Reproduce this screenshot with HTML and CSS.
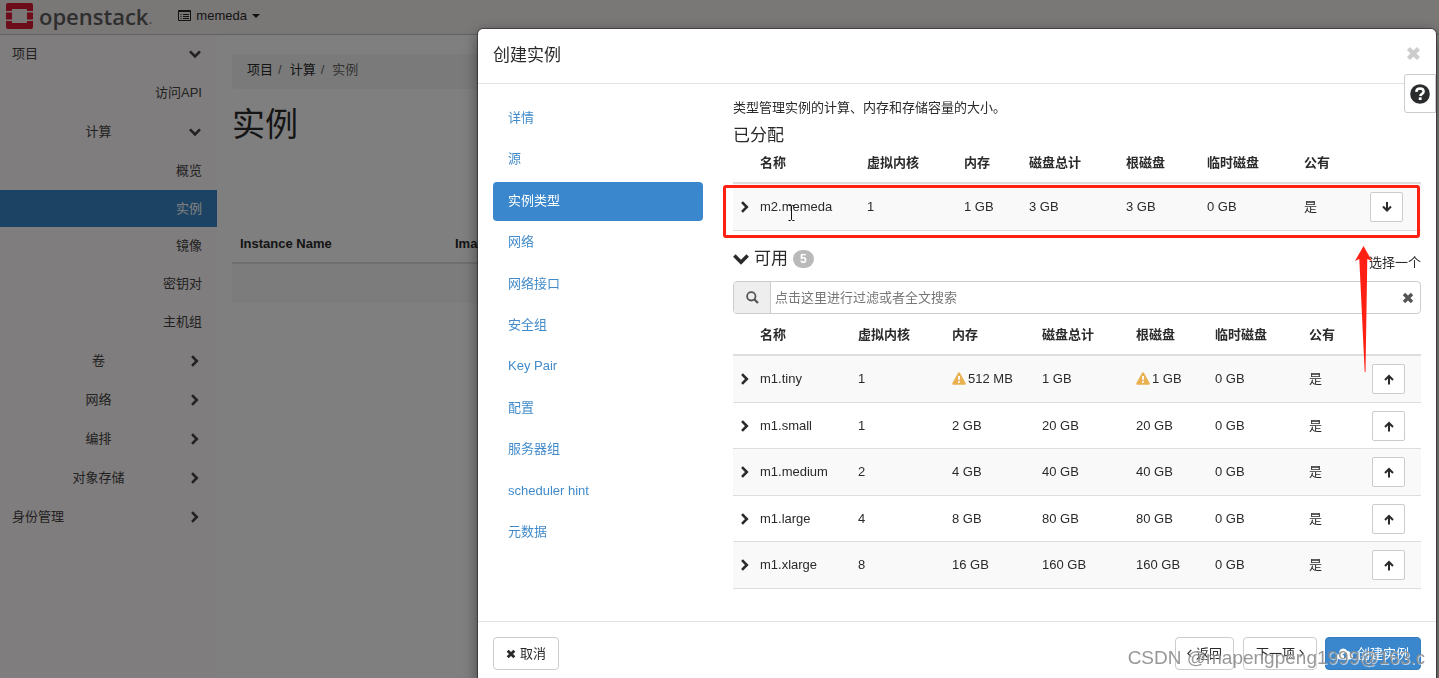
FILE: index.html
```html
<!DOCTYPE html>
<html lang="zh-CN">
<head>
<meta charset="utf-8">
<title>实例 - OpenStack Dashboard</title>
<link rel="stylesheet" href="styles.css">
</head>
<body>
<svg class="defs" aria-hidden="true">
  <symbol id="chev-right" viewBox="0 0 12 12"><path d="M3 1.200 7.800 6 3 10.800" fill="none" stroke="currentColor" stroke-width="2.600"/></symbol>
  <symbol id="chev-down" viewBox="0 0 12 12"><path d="M1 3.400 6 8.400 11 3.400" fill="none" stroke="currentColor" stroke-width="2.600"/></symbol>
  <symbol id="times" viewBox="0 0 12 12"><path d="M2 2 10 10M10 2 2 10" fill="none" stroke="currentColor" stroke-width="3.400"/></symbol>
  <symbol id="arrow-up" viewBox="0 0 12 12"><path d="M6 11.500V3M2 7 6 3 10 7" fill="none" stroke="currentColor" stroke-width="2"/></symbol>
  <symbol id="arrow-down" viewBox="0 0 12 12"><path d="M6 1V9.500M2 5.500 6 9.500 10 5.500" fill="none" stroke="currentColor" stroke-width="2"/></symbol>
  <symbol id="warning" viewBox="0 0 14 13"><path d="M7 .3Q7.700.3 8 .9L13.700 11.300Q14 12.600 12.900 12.700H1.100Q0 12.600.300 11.300L6 .9Q6.300.3 7 .3Z" fill="#e9b04f"/><path d="M6 4H8L7.700 8.300H6.300ZM6.100 9.200H7.900V11H6.100Z" fill="#fff"/></symbol>
</svg>

<header class="topbar">
  <a class="brand" href="#">
    <svg class="logo" viewBox="0 0 27 26" aria-hidden="true">
      <path d="M2 0H25Q27 0 27 2V8H21V6H6V8H0V2Q0 0 2 0ZM0 9.500H6V16.500H0ZM21 9.500H27V16.500H21ZM0 18H6V20H21V18H27V24Q27 26 25 26H2Q0 26 0 24Z" fill="#da1a32"/>
    </svg>
    <span>openstack</span><small>.</small>
  </a>
  <button class="project" type="button">
    <svg width="13" height="11" viewBox="0 0 13 11" aria-hidden="true"><path d="M.5.5H12.500V10.500H.5Z" fill="none" stroke="#222"/><path d="M.5 1.500H12.500M2.500 4.500H3.500M5 4.500H11M2.500 6.500H3.500M5 6.500H11M2.500 8.500H3.500M5 8.500H11" stroke="#222"/></svg>
    memeda
    <span class="caret"></span>
  </button>
</header>

<div class="page">
  <nav class="sidebar" aria-label="主导航">
    <a class="root" href="#"><span>项目</span><svg><use href="#chev-down"/></svg></a>
    <a class="leaf" href="#">访问API</a>
    <a class="group" href="#"><span>计算</span><svg><use href="#chev-down"/></svg></a>
    <a class="leaf" href="#">概览</a>
    <a class="leaf active" href="#">实例</a>
    <a class="leaf sub" href="#">镜像</a>
    <a class="leaf sub" href="#">密钥对</a>
    <a class="leaf sub" href="#">主机组</a>
    <a class="group" href="#"><span>卷</span><svg><use href="#chev-right"/></svg></a>
    <a class="group" href="#"><span>网络</span><svg><use href="#chev-right"/></svg></a>
    <a class="group" href="#"><span>编排</span><svg><use href="#chev-right"/></svg></a>
    <a class="group" href="#"><span>对象存储</span><svg><use href="#chev-right"/></svg></a>
    <a class="root" href="#"><span>身份管理</span><svg><use href="#chev-right"/></svg></a>
  </nav>
  <main class="content">
    <ol class="breadcrumb">
      <li><a href="#">项目</a></li>
      <li><a href="#">计算</a></li>
      <li class="current">实例</li>
    </ol>
    <h1>实例</h1>
    <table class="instances">
      <thead><tr><th class="c-name">Instance Name</th><th>Image Name</th></tr></thead>
      <tbody><tr><td colspan="2"></td></tr></tbody>
    </table>
  </main>
</div>

<div class="overlay">
  <section class="modal" role="dialog" aria-labelledby="dlg-title">
    <header class="modal-head">
      <h2 id="dlg-title">创建实例</h2>
      <button class="close" type="button" aria-label="关闭"><svg><use href="#times"/></svg></button>
    </header>
    <button class="help" type="button" aria-label="帮助">
      <svg viewBox="0 0 20 20" aria-hidden="true"><circle cx="10" cy="10" r="9.800" fill="#292b2d"/><path d="M6.300 7.800Q6.500 4.500 10.100 4.500 13.600 4.600 13.600 7.400 13.600 8.900 12 9.800 10.400 10.700 10.200 12" fill="none" stroke="#fff" stroke-width="2.500"/><path d="M8.800 13.300H11.600V16H8.800Z" fill="#fff"/></svg>
    </button>

    <div class="modal-body">
      <nav class="steps" aria-label="步骤">
        <a href="#">详情</a>
        <a href="#">源</a>
        <a class="active" href="#">实例类型</a>
        <a href="#">网络</a>
        <a href="#">网络接口</a>
        <a href="#">安全组</a>
        <a href="#">Key Pair</a>
        <a href="#">配置</a>
        <a href="#">服务器组</a>
        <a href="#">scheduler hint</a>
        <a href="#">元数据</a>
      </nav>

      <div class="flavors">
        <p>类型管理实例的计算、内存和存储容量的大小。</p>
        <h3>已分配</h3>
        <div class="allocated">
          <table class="grid">
            <colgroup><col class="w27"><col class="w107"><col class="w97"><col class="w65"><col class="w97"><col class="w81"><col class="w97"><col class="w66"><col class="w51"></colgroup>
            <thead><tr><th></th><th>名称</th><th>虚拟内核</th><th>内存</th><th>磁盘总计</th><th>根磁盘</th><th>临时磁盘</th><th>公有</th><th></th></tr></thead>
            <tbody>
              <tr><td class="tog"><svg><use href="#chev-right"/></svg></td><td>m2.memeda</td><td>1</td><td>1 GB</td><td>3 GB</td><td>3 GB</td><td>0 GB</td><td>是</td><td><button class="move" type="button" aria-label="移除 m2.memeda"><svg><use href="#arrow-down"/></svg></button></td></tr>
            </tbody>
          </table>
          <div class="mark"></div>
          <svg class="ibeam" viewBox="0 0 7 16" aria-hidden="true"><path d="M.5.5H2.500L3.500 1.500 4.500.5H6.500M3.500 1.500V14.500M.5 15.500H2.500L3.500 14.500 4.500 15.500H6.500" fill="none" stroke="#111"/></svg>
        </div>

        <div class="avail-head">
          <h3><svg><use href="#chev-down"/></svg>可用<span class="badge">5</span></h3>
          <span class="hint">选择一个</span>
          <svg class="pointer" viewBox="0 0 18 127" aria-hidden="true"><path d="M8.500 0 17 15 12.300 13 10.500 126H9.700L4.300 13 0 15Z" fill="#ff2013"/></svg>
        </div>

        <div class="search">
          <label for="filter" aria-label="过滤"><svg viewBox="0 0 13 13"><circle cx="5.300" cy="5.300" r="4.200" fill="none" stroke="#555" stroke-width="1.800"/><path d="M8.500 8.500 12 12" stroke="#555" stroke-width="2.200"/></svg></label>
          <input id="filter" type="text" placeholder="点击这里进行过滤或者全文搜索">
          <button type="button" aria-label="清除"><svg><use href="#times"/></svg></button>
        </div>

        <table class="grid">
          <colgroup><col class="w27"><col class="w98"><col class="w94"><col class="w90"><col class="w94"><col class="w79"><col class="w94"><col class="w63"><col class="w49"></colgroup>
          <thead><tr><th></th><th>名称</th><th>虚拟内核</th><th>内存</th><th>磁盘总计</th><th>根磁盘</th><th>临时磁盘</th><th>公有</th><th></th></tr></thead>
          <tbody>
            <tr><td class="tog"><svg><use href="#chev-right"/></svg></td><td>m1.tiny</td><td>1</td><td><svg class="warn"><use href="#warning"/></svg>512 MB</td><td>1 GB</td><td><svg class="warn"><use href="#warning"/></svg>1 GB</td><td>0 GB</td><td>是</td><td><button class="move" type="button" aria-label="选择 m1.tiny"><svg><use href="#arrow-up"/></svg></button></td></tr>
            <tr><td class="tog"><svg><use href="#chev-right"/></svg></td><td>m1.small</td><td>1</td><td>2 GB</td><td>20 GB</td><td>20 GB</td><td>0 GB</td><td>是</td><td><button class="move" type="button" aria-label="选择 m1.small"><svg><use href="#arrow-up"/></svg></button></td></tr>
            <tr><td class="tog"><svg><use href="#chev-right"/></svg></td><td>m1.medium</td><td>2</td><td>4 GB</td><td>40 GB</td><td>40 GB</td><td>0 GB</td><td>是</td><td><button class="move" type="button" aria-label="选择 m1.medium"><svg><use href="#arrow-up"/></svg></button></td></tr>
            <tr><td class="tog"><svg><use href="#chev-right"/></svg></td><td>m1.large</td><td>4</td><td>8 GB</td><td>80 GB</td><td>80 GB</td><td>0 GB</td><td>是</td><td><button class="move" type="button" aria-label="选择 m1.large"><svg><use href="#arrow-up"/></svg></button></td></tr>
            <tr><td class="tog"><svg><use href="#chev-right"/></svg></td><td>m1.xlarge</td><td>8</td><td>16 GB</td><td>160 GB</td><td>160 GB</td><td>0 GB</td><td>是</td><td><button class="move" type="button" aria-label="选择 m1.xlarge"><svg><use href="#arrow-up"/></svg></button></td></tr>
          </tbody>
        </table>
      </div>
    </div>

    <footer class="modal-foot">
      <button class="btn cancel" type="button"><svg><use href="#times"/></svg>取消</button>
      <button class="btn back" type="button"><svg class="thin" viewBox="0 0 5 9"><path d="M4.300.8.900 4.500 4.300 8.200" fill="none" stroke="#333" stroke-width="1.200"/></svg>返回</button>
      <button class="btn" type="button">下一项<svg class="thin" viewBox="0 0 5 9"><path d="M.7.8 4.100 4.500.7 8.200" fill="none" stroke="#333" stroke-width="1.200"/></svg></button>
      <button class="btn primary" type="button"><svg viewBox="0 0 16 12"><path d="M3.500 11.500Q0 11.400.1 8.300.3 6.200 2.200 5.400 2.100.700 6.200.500 9.100.400 10.300 3 13 2.500 13.300 5.500 15.900 6.100 15.900 8.500 15.700 11.400 12.700 11.500Z" fill="#fff"/><path d="M8 4 11 7.300H9V10H7V7.300H5Z" fill="#428bca"/></svg>创建实例</button>
    </footer>
  </section>
</div>
<div class="watermark">CSDN @mapengpeng1999@163.c</div>
</body>
</html>
```

FILE: styles.css
```css
* { box-sizing: border-box; }

body {
  margin: 0;
  height: 100vh;
  overflow: hidden;
  background: #fff;
  color: #2a2a2a;
  font: 13px/18px "Liberation Sans", "Noto Sans CJK SC", sans-serif;
}

a { color: inherit; text-decoration: none; }
button, input { font: inherit; color: inherit; }
svg { display: block; flex: none; width: 12px; height: 12px; }
.defs { position: absolute; width: 0; height: 0; }

/* Top bar */
.topbar {
  display: flex;
  align-items: center;
  gap: 26px;
  height: 35px;
  padding: 0 6px 3px;
  background: #f4eeef;
  border-bottom: 1px solid #c4c0c0;
}
.brand {
  display: flex;
  align-items: center;
  color: #5c5c5c;
  font: 600 22px/26px "Open Sans", sans-serif;
}
.brand span { margin-left: 6px; }
.brand small { font-size: 14px; color: #999; padding-top: 6px; }
.logo { width: 27px; height: 26px; }
.project {
  display: flex;
  align-items: center;
  gap: 5px;
  padding: 0;
  border: 0;
  background: none;
}
.project svg { width: 13px; height: 11px; }
.caret {
  border: 4px solid transparent;
  border-top-color: #222;
  border-bottom: 0;
}

/* Sidebar */
.page { display: flex; height: calc(100vh - 35px); }
.sidebar { flex: none; width: 217px; background: #fffafb; }
.sidebar a {
  display: flex;
  align-items: center;
  gap: 4px;
  height: 39px;
  padding: 0 16px 0 12px;
  color: #444;
}
.sidebar span { flex: 1; }
.sidebar .group span { text-align: center; }
.sidebar .root:first-child { height: 38px; }
.sidebar .leaf { justify-content: flex-end; padding-right: 15px; }
.sidebar .sub { height: 38px; }
.sidebar .active { height: 37px; background: #3a86c8; color: #fff; }

/* Page content */
.content { flex: 1; min-width: 0; padding: 19px 15px 0; }
.breadcrumb {
  display: flex;
  margin: 0 0 16px;
  padding: 7px 15px 10px;
  list-style: none;
  background: #f5f5f5;
  border-radius: 4px;
}
.breadcrumb li + li::before { content: "/"; padding: 0 8px 0 5px; color: #666; }
.breadcrumb .current { color: #666; }
h1 { margin: 0; font-size: 33px; line-height: 40px; font-weight: 400; }
.instances { width: 100%; margin-top: 82px; border-collapse: collapse; table-layout: fixed; }
.instances th {
  padding: 8px 8px 9px;
  text-align: left;
  border-bottom: 2px solid #ddd;
}
.instances .c-name { width: 215px; }
.instances td { height: 40px; background: #f9f9f9; }

/* Dialog */
.overlay {
  position: fixed;
  inset: 0;
  padding: 29px 3px 0 478px;
  overflow: hidden;
  background: rgba(0, 0, 0, .5);
}
.modal {
  position: relative;
  background: #fff;
  border-radius: 5px;
  box-shadow: 0 0 0 1px rgba(0, 0, 0, .4), 0 5px 15px rgba(0, 0, 0, .5);
}
.modal-head {
  display: flex;
  align-items: center;
  justify-content: space-between;
  height: 55px;
  padding: 0 15px;
  border-bottom: 1px solid #e2e2e2;
}
h2, h3 { margin: 0; font-size: 17px; line-height: 24px; font-weight: 400; }
.close { padding: 0 0 6px; border: 0; background: none; color: #ccc; }
.close svg { width: 15px; height: 15px; }
.help {
  position: absolute;
  top: 45px;
  right: 0;
  width: 32px;
  height: 39px;
  padding: 0 5px;
  background: #fff;
  border: 1px solid #ccc;
  border-radius: 3px 0 0 3px;
}
.help svg { width: 20px; height: 20px; }

.modal-body { display: flex; gap: 30px; padding: 15px 15px 32px; }
.steps {
  display: flex;
  flex-direction: column;
  justify-content: space-between;
  flex: none;
  width: 210px;
  margin-bottom: 37px;
}
.steps a {
  height: 39px;
  padding: 10px 15px;
  border-radius: 4px;
  color: #428bca;
}
.steps .active { background: #3a87cd; color: #fff; }

.flavors { flex: 1; min-width: 0; }
.flavors p { margin: 0 0 7px; }
.allocated { position: relative; }

.grid { width: 100%; table-layout: fixed; border-collapse: separate; border-spacing: 0; }
.grid th {
  padding: 6px 0 10px;
  text-align: left;
  white-space: nowrap;
  border-bottom: 2px solid #ddd;
}
.grid td { height: 47px; padding: 0; white-space: nowrap; border-bottom: 1px solid #ddd; }
.grid tr:nth-child(even) td { height: 46px; }
.grid tbody tr:nth-child(odd) { background: #f9f9f9; }
.grid .tog svg { margin-left: 6px; }
.grid .warn { display: inline-block; width: 14px; height: 13px; margin-right: 2px; vertical-align: -2px; }
.w27 { width: 27px; } .w49 { width: 49px; } .w51 { width: 51px; }
.w63 { width: 63px; } .w65 { width: 65px; } .w66 { width: 66px; }
.w79 { width: 79px; } .w81 { width: 81px; } .w90 { width: 90px; }
.w94 { width: 94px; } .w97 { width: 97px; } .w98 { width: 98px; }
.w107 { width: 107px; }

.move {
  display: grid;
  place-items: center;
  width: 33px;
  height: 30px;
  padding: 0;
  background: #fff;
  border: 1px solid #ccc;
  border-radius: 2px;
}

/* Highlight frame round the chosen row */
.mark {
  position: absolute;
  inset: 37px 1px -7px -10px;
  border: 3px solid #ff2013;
  border-radius: 3px;
  pointer-events: none;
}
.ibeam { position: absolute; left: 55px; top: 57px; width: 7px; height: 16px; }

.avail-head {
  position: relative;
  display: flex;
  justify-content: space-between;
  height: 26px;
  margin: 15px 0 9px;
}
.avail-head h3 { display: flex; align-items: center; gap: 5px; }
.avail-head h3 svg { width: 16px; height: 16px; }
.avail-head .hint { align-self: flex-end; }
.avail-head .pointer { position: absolute; right: 48px; top: 0; width: 18px; height: 127px; z-index: 1; }
.badge {
  padding: 0 7px;
  border-radius: 9px;
  background: #b9b9b9;
  color: #fff;
  font-size: 12px;
  line-height: 18px;
  font-weight: 700;
}

.search {
  display: flex;
  height: 33px;
  margin-bottom: 6px;
  border: 1px solid #ccc;
  border-radius: 4px;
  overflow: hidden;
}
.search label {
  display: grid;
  place-items: center;
  width: 37px;
  background: #eee;
  border-right: 1px solid #ccc;
}
.search label svg { width: 13px; height: 13px; }
.search input { flex: 1; min-width: 0; padding: 0 4px; border: 0; outline: 0; background: none; }
.search input::placeholder { color: #777; opacity: 1; }
.search button { padding: 0 6px; border: 0; background: none; color: #555; }

.modal-foot {
  display: flex;
  gap: 8px;
  padding: 15px;
  border-top: 1px solid #e2e2e2;
}
.btn {
  display: flex;
  align-items: center;
  gap: 4px;
  height: 33px;
  padding: 0 12px;
  background: #fff;
  border: 1px solid #ccc;
  border-radius: 4px;
}
.btn.cancel { margin-right: auto; }
.btn.cancel svg { width: 10px; height: 10px; }
.btn.back { padding: 0 11px; margin-right: 1px; }
.btn .thin { width: 5px; height: 9px; }
.btn.primary { padding: 0 11px; background: #3a87cd; border-color: #357ebd; color: #fff; }
.btn.primary svg { width: 16px; }

.watermark {
  position: fixed;
  right: 14px;
  bottom: 8px;
  color: rgba(140, 140, 140, .9);
  font-size: 19px;
  line-height: 24px;
  text-shadow: 1px 1px 0 rgba(255, 255, 255, .6);
  pointer-events: none;
}
```
